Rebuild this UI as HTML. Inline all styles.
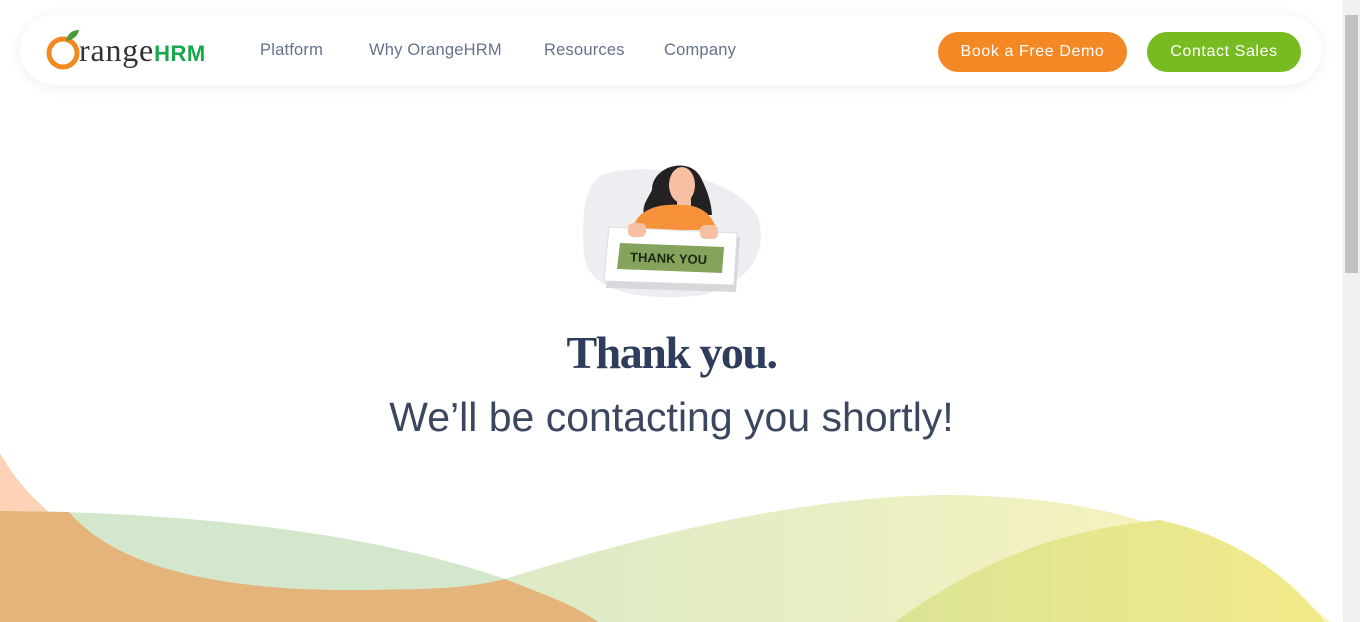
<!DOCTYPE html>
<html><head><meta charset="utf-8"><style>
*{margin:0;padding:0;box-sizing:border-box}
body{width:1360px;height:622px;overflow:hidden;background:#fff;font-family:"Liberation Sans",sans-serif;position:relative}
.nav{position:absolute;left:20px;top:15px;width:1302px;height:70px;border-radius:35px;background:#fff;box-shadow:0 2px 14px rgba(0,0,0,0.07)}
.nl{position:absolute;top:41px;font-size:16.5px;color:#64728c;letter-spacing:0.2px}
.btn{position:absolute;top:32px;height:40px;border-radius:20px;color:#fff;font-size:16px;line-height:40px;text-align:center;letter-spacing:0.6px}
.sb{position:absolute;right:0;top:0;width:17px;height:622px;background:#f1f1f1}
.th{position:absolute;right:2px;top:15px;width:13px;height:258px;background:#c1c1c1}
h1{position:absolute;left:0;width:1343px;top:326px;text-align:center;font-family:"Liberation Serif",serif;font-weight:bold;font-size:46px;color:#2f3d5c;letter-spacing:-1.5px}
h2{position:absolute;left:0;width:1343px;top:394px;text-align:center;font-weight:normal;font-size:41px;color:#3a475f}
</style></head><body>
<svg width="1343" height="622" style="position:absolute;left:0;top:0">
<defs>
<linearGradient id="g" x1="0" x2="1325" gradientUnits="userSpaceOnUse"><stop offset="0" stop-color="#fdd3b8"/><stop offset="0.09" stop-color="#fdd3b8"/><stop offset="0.12" stop-color="#d6e9cb"/><stop offset="0.45" stop-color="#dfebc6"/><stop offset="0.85" stop-color="#f4f2bf"/><stop offset="1" stop-color="#f6f3b8"/></linearGradient>
<linearGradient id="y" x1="0" x2="1"><stop offset="0" stop-color="#dbe494"/><stop offset="1" stop-color="#f2ea8a"/></linearGradient>
</defs>
<path d="M0 453 C60 560 200 592 364 590 C420 589 460 590 505 579 C660 530 850 485 1000 497 C1150 505 1260 560 1330 622 L0 622Z" fill="url(#g)"/>
<path d="M0 511 C200 512 380 535 505 579 C545 595 575 605 598 622 L0 622Z" fill="#d3e7cc"/>
<path d="M0 511 L69 512 C110 560 200 592 364 590 C420 589 460 590 505 579 C545 595 575 605 598 622 L0 622Z" fill="#e5b47a"/>
<path d="M895 622 C980 560 1060 530 1160 520 C1250 540 1300 590 1325 622Z" fill="url(#y)"/>
</svg>
<div class="nav"></div>
<svg style="position:absolute;left:46px;top:28px" width="40" height="44"><circle cx="17" cy="25" r="14" fill="none" stroke="#f28a20" stroke-width="5"/><path d="M20 13 C22 4 28 2 33 2 C32 8 27 12 20 13Z" fill="#4a9a3a"/></svg>
<div style="position:absolute;left:79px;top:32px;font-family:'Liberation Serif',serif;font-size:32px;color:#333;letter-spacing:0.8px">range<span style="font-family:'Liberation Sans',sans-serif;font-size:22px;color:#1aa64a;font-weight:bold;letter-spacing:0.5px">HRM</span></div>
<div class="nl" style="left:260px">Platform</div>
<div class="nl" style="left:369px">Why OrangeHRM</div>
<div class="nl" style="left:544px">Resources</div>
<div class="nl" style="left:664px">Company</div>
<div class="btn" style="left:938px;width:189px;background:#f48825">Book a Free Demo</div>
<div class="btn" style="left:1147px;width:154px;background:#76bc21">Contact Sales</div>
<svg style="position:absolute;left:582px;top:155px" width="182" height="148">
<path d="M20 20 C60 5 150 20 175 60 C190 100 160 140 100 142 C40 144 5 130 2 100 C0 70 0 30 20 20Z" fill="#eceef2"/>
<path d="M70 35 C70 10 110 0 120 25 C130 45 130 60 130 60 L62 60 C60 50 65 45 70 35Z" fill="#222"/>
<ellipse cx="100" cy="30" rx="13" ry="18" fill="#f7c0a3"/>
<rect x="95" y="40" width="14" height="12" fill="#f7c0a3"/>
<path d="M50 75 C55 55 75 48 100 50 C120 50 130 60 135 75Z" fill="#f7923a"/>
<path d="M30 78 L158 82 L154 137 L24 133Z" fill="#d6d8dc"/>
<path d="M27 72 L155 78 L152 130 L22 126Z" fill="#fff" stroke="#dcdde0"/>
<rect x="46" y="68" width="18" height="14" rx="5" fill="#f7c0a3"/>
<rect x="118" y="70" width="18" height="14" rx="5" fill="#f7c0a3"/>
<path d="M38 88 L142 92 L140 118 L35 114Z" fill="#86a35e"/>
<text x="48" y="108" font-family="Liberation Sans" font-weight="bold" font-size="13" fill="#1c2a14" transform="rotate(2 90 105)">THANK YOU</text>
</svg>
<h1>Thank you.</h1>
<h2>We’ll be contacting you shortly!</h2>
<div class="sb"><div class="th"></div></div>
</body></html>
